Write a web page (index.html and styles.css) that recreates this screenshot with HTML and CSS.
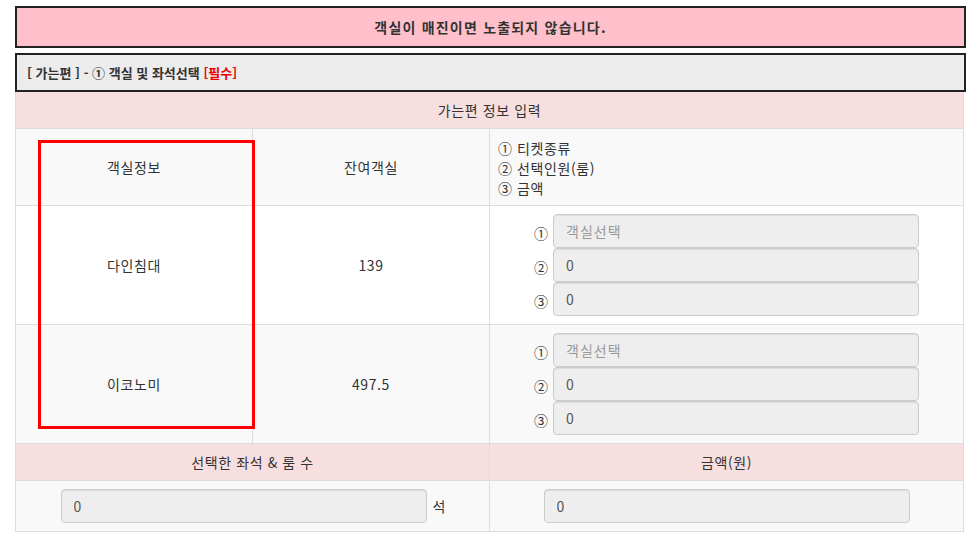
FILE: index.html
```html
<!DOCTYPE html>
<html lang="ko">
<head>
<meta charset="utf-8">
<title>객실 및 좌석선택</title>
<link rel="stylesheet" href="styles.css">
</head>
<body>
<div class="page">
  <div class="notice">객실이 매진이면 노출되지 않습니다.</div>
  <div class="section-title">[ 가는편 ] - ① 객실 및 좌석선택 <span class="req">[필수]</span></div>
  <div class="table-wrap">
    <table class="info-table">
      <colgroup><col class="c1"><col class="c2"><col class="c3"></colgroup>
      <tr class="row-pink">
        <th colspan="3">가는편 정보 입력</th>
      </tr>
      <tr class="row-gray">
        <td class="center">객실정보</td>
        <td class="center">잔여객실</td>
        <td class="legend">① 티켓종류<br>② 선택인원(룸)<br>③ 금액</td>
      </tr>
      <tr class="row-white">
        <td class="center">다인침대</td>
        <td class="center">139</td>
        <td>
          <div class="fields">
            <div class="field"><span class="num">①</span><input class="inp" type="text" placeholder="객실선택" readonly></div>
            <div class="field"><span class="num">②</span><input class="inp" type="text" value="0" readonly></div>
            <div class="field"><span class="num">③</span><input class="inp" type="text" value="0" readonly></div>
          </div>
        </td>
      </tr>
      <tr class="row-gray">
        <td class="center">이코노미</td>
        <td class="center">497.5</td>
        <td>
          <div class="fields">
            <div class="field"><span class="num">①</span><input class="inp" type="text" placeholder="객실선택" readonly></div>
            <div class="field"><span class="num">②</span><input class="inp" type="text" value="0" readonly></div>
            <div class="field"><span class="num">③</span><input class="inp" type="text" value="0" readonly></div>
          </div>
        </td>
      </tr>
      <tr class="row-pink">
        <th colspan="2">선택한 좌석 &amp; 룸 수</th>
        <th>금액(원)</th>
      </tr>
      <tr class="row-gray">
        <td colspan="2">
          <div class="total"><input class="inp" type="text" value="0" readonly><span class="unit">석</span></div>
        </td>
        <td>
          <div class="total"><input class="inp" type="text" value="0" readonly></div>
        </td>
      </tr>
    </table>
    <div class="highlight"></div>
  </div>
</div>
</body>
</html>
```
FILE: styles.css
```css
* { box-sizing: border-box; }
html, body { margin: 0; padding: 0; background: #fff; }
body {
  font-family: "Noto Sans CJK KR", "Noto Sans", sans-serif;
  font-size: 14px;
  line-height: 20px;
  color: #333;
  letter-spacing: 0.6px;
}
.page {
  padding: 6px 0 0 15px;
  width: 966px;
}
.notice {
  width: 951px;
  height: 42px;
  border: 2px solid #222;
  background: #ffc0cb;
  font-weight: bold;
  text-align: center;
  line-height: 38px;
  color: #333;
  letter-spacing: 1.2px;
}
.section-title {
  margin-top: 5px;
  width: 951px;
  height: 39px;
  border: 2px solid #222;
  background: #ececec;
  font-weight: bold;
  font-size: 13px;
  line-height: 35px;
  padding-left: 10px;
  color: #333;
  letter-spacing: 0;
}
.req { color: #e00; }
.table-wrap {
  position: relative;
  width: 949px;
}
.info-table {
  width: 949px;
  border-collapse: collapse;
  table-layout: fixed;
  border-left: 1px solid #d4d4d4;
  border-right: 1px solid #ddd;
}
.c1 { width: 25%; }
.c2 { width: 25%; }
.c3 { width: 50%; }
.info-table th,
.info-table td {
  padding: 8px;
  border: 1px solid #ddd;
  border-top: 0;
  vertical-align: middle;
  font-weight: normal;
}
.info-table tr + tr th,
.info-table tr + tr td { border-top: 1px solid #ddd; }
.row-pink { background: #f7dfdf; }
.row-pink th { text-align: center; }
.row-gray { background: #f9f9f9; }
.row-white { background: #fff; }
.center { text-align: center; }
.info-table td.legend { text-align: left; padding: 9px 8px 7px; }
.fields {
  display: flex;
  flex-direction: column;
  align-items: center;
}
.field {
  display: flex;
  align-items: center;
  height: 34px;
}
.num {
  width: 19px;
  padding-top: 4px;
  font-size: 14px;
  letter-spacing: 0;
}
.inp {
  width: 366px;
  height: 34px;
  border: 1px solid #ccc;
  border-radius: 4px;
  background: #eee;
  padding: 6px 12px;
  font-family: inherit;
  font-size: 14px;
  line-height: 20px;
  letter-spacing: 1px;
  color: #555;
  box-shadow: inset 0 1px 1px rgba(0,0,0,0.075);
  outline: none;
}
.inp::placeholder { color: #999; }
.total {
  display: flex;
  align-items: center;
  justify-content: center;
}
.unit { width: 18px; padding-left: 6px; }
.highlight {
  position: absolute;
  left: 23px;
  top: 48px;
  width: 217px;
  height: 289px;
  border: 3px solid #f00;
  pointer-events: none;
}
```
